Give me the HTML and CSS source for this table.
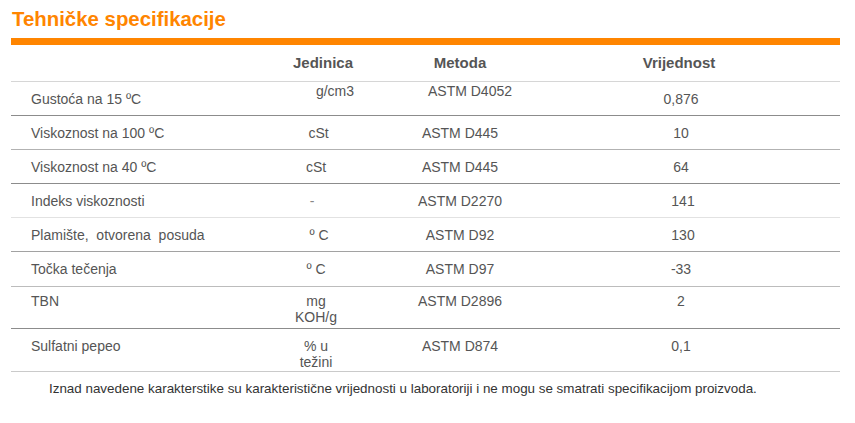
FILE: index.html
```html
<!DOCTYPE html>
<html lang="hr">
<head>
<meta charset="utf-8">
<title>Tehničke specifikacije</title>
<link rel="stylesheet" href="styles.css">
</head>
<body>
<section class="specs">
  <h2 class="specs-title">Tehničke specifikacije</h2>
  <div class="specs-bar"></div>
  <div class="specs-table">
    <div class="row head">
      <div class="c-name"></div>
      <div class="c-unit u-head">Jedinica</div>
      <div class="c-method">Metoda</div>
      <div class="c-value v-head">Vrijednost</div>
    </div>
    <div class="row r1 b-dark">
      <div class="c-name">Gustoća na 15 ºC</div>
      <div class="c-unit top u-r1">g/cm3</div>
      <div class="c-method top m-r1">ASTM D4052</div>
      <div class="c-value">0,876</div>
    </div>
    <div class="row b-mid">
      <div class="c-name">Viskoznost na 100 ºC</div>
      <div class="c-unit u-r2">cSt</div>
      <div class="c-method">ASTM D445</div>
      <div class="c-value">10</div>
    </div>
    <div class="row b-dark">
      <div class="c-name">Viskoznost na 40 ºC</div>
      <div class="c-unit">cSt</div>
      <div class="c-method">ASTM D445</div>
      <div class="c-value">64</div>
    </div>
    <div class="row b-faint">
      <div class="c-name">Indeks viskoznosti</div>
      <div class="c-unit u-dash">-</div>
      <div class="c-method">ASTM D2270</div>
      <div class="c-value v-r4">141</div>
    </div>
    <div class="row b-grey">
      <div class="c-name">Plamište,&nbsp; otvorena&nbsp; posuda</div>
      <div class="c-unit u-r5">º C</div>
      <div class="c-method">ASTM D92</div>
      <div class="c-value v-r4">130</div>
    </div>
    <div class="row r6 b-light">
      <div class="c-name">Točka tečenja</div>
      <div class="c-unit">º C</div>
      <div class="c-method">ASTM D97</div>
      <div class="c-value">-33</div>
    </div>
    <div class="row r7 b-dark">
      <div class="c-name">TBN</div>
      <div class="c-unit">mg<br>KOH/g</div>
      <div class="c-method">ASTM D2896</div>
      <div class="c-value">2</div>
    </div>
    <div class="row r8 b-soft">
      <div class="c-name">Sulfatni pepeo</div>
      <div class="c-unit">% u<br>težini</div>
      <div class="c-method">ASTM D874</div>
      <div class="c-value">0,1</div>
    </div>
  </div>
  <p class="specs-note">Iznad navedene karakterstike su karakteristične vrijednosti u laboratoriji i ne mogu se smatrati specifikacijom proizvoda.</p>
</section>
</body>
</html>
```

FILE: styles.css
```css
html, body {
  margin: 0;
  padding: 0;
  background: #ffffff;
}

body {
  font-family: "Liberation Sans", Arial, sans-serif;
  color: #555555;
}

.specs {
  width: 829px;
  margin: 0 0 0 11px;
}

.specs-title {
  margin: 7px 0 0 1px;
  font-size: 20.4px;
  line-height: 24px;
  font-weight: bold;
  color: #ff8500;
}

.specs-bar {
  height: 7px;
  margin-top: 7px;
  background: #ff8500;
}

.specs-table {
  display: flex;
  flex-direction: column;
}

.row {
  display: grid;
  grid-template-columns: 247px 116px 172px 270px 1fr;
  align-items: center;
  height: 33px;
  border-bottom: 1px solid #8c8c8c;
  font-size: 14px;
  line-height: 16px;
}

.row.head {
  height: 36px;
  font-size: 15px;
  line-height: 18px;
  font-weight: bold;
  border-bottom-color: #d6d6d6;
}

.row.r6 { height: 34px; }
.row.r7 { height: 41px; align-items: start; }
.row.r7 > div { padding-top: 6px; }
.row.r8 { height: 42px; align-items: start; }
.row.r8 > div { padding-top: 9px; }

.b-dark  { border-bottom-color: #8c8c8c; }
.b-mid   { border-bottom-color: #b2b2b2; }
.b-faint { border-bottom-color: #e2e2e2; }
.b-grey  { border-bottom-color: #a2a2a2; }
.b-light { border-bottom-color: #bcbcbc; }
.b-soft  { border-bottom-color: #cacaca; }

.c-name {
  padding-left: 20px;
  white-space: nowrap;
}

.c-unit,
.c-method,
.c-value {
  text-align: center;
  white-space: nowrap;
}

.top {
  align-self: start;
  padding-top: 1px;
}

/* small offsets carried over from the source document */
.u-head { padding-left: 14px; }
.u-r1   { padding-left: 38px; }
.u-r2   { padding-left: 5px; }
.u-dash { padding-right: 8px; color: #888888; }
.u-r5   { padding-left: 6px; }
.m-r1   { padding-left: 20px; }
.v-head { padding-right: 4px; }
.v-r4   { padding-left: 4px; }

.specs-note {
  margin: 9px 0 0;
  padding-left: 38px;
  font-size: 13.4px;
  line-height: 16px;
  color: #333333;
}
```
